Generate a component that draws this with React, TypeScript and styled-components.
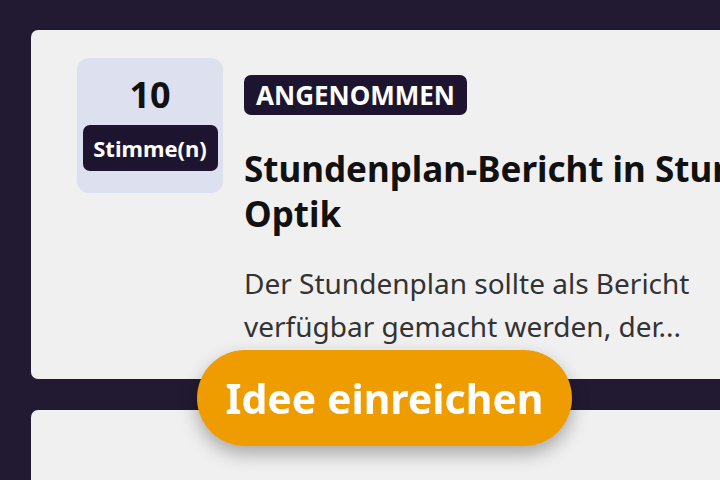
import styled, { createGlobalStyle } from "styled-components";

const GlobalStyle = createGlobalStyle`
  html, body {
    margin: 0;
    padding: 0;
    background: #221a32;
    overflow: hidden;
    font-family: "Noto Sans", "Open Sans", sans-serif;
  }
`;

const Page = styled.div`
  width: 1000px;
  padding: 30px 0 0 31px;
  display: flex;
  flex-direction: column;
  gap: 31px;
`;

const Card = styled.div<{ $height: number }>`
  background: #f0f0f0;
  border-radius: 7px;
  height: ${(p) => p.$height}px;
  padding: 28px 46px;
  box-sizing: border-box;
  display: flex;
  gap: 21px;
`;

const VoteBox = styled.div`
  flex: none;
  width: 146px;
  height: 135px;
  background: #dde1ef;
  border-radius: 12px;
  display: flex;
  flex-direction: column;
  align-items: center;
  padding-top: 13px;
  box-sizing: border-box;
`;

const VoteCount = styled.div`
  font-size: 36px;
  font-weight: 700;
  line-height: 48px;
  color: #111;
`;

const VoteLabel = styled.div`
  margin-top: 6px;
  width: 135px;
  height: 46px;
  border-radius: 7px;
  background: #1d1530;
  color: #fff;
  font-size: 22px;
  font-weight: 700;
  display: flex;
  align-items: center;
  justify-content: center;
`;

const Content = styled.div`
  width: 700px;
  padding-top: 17px;
`;

const Status = styled.span`
  display: inline-block;
  background: #1d1530;
  color: #fff;
  font-size: 26px;
  font-weight: 700;
  text-transform: uppercase;
  line-height: 40px;
  padding: 0 12px;
  border-radius: 7px;
`;

const Title = styled.h2`
  margin: 31px 0 0;
  font-size: 35px;
  font-weight: 700;
  line-height: 45px;
  color: #111;
  width: 620px;
`;

const Description = styled.p`
  margin: 26px 0 0;
  font-size: 28px;
  line-height: 43px;
  color: #333;
  width: 500px;
`;

const SubmitButton = styled.button`
  position: fixed;
  left: 197px;
  bottom: 34px;
  width: 375px;
  height: 96px;
  border: none;
  border-radius: 48px;
  background: #ef9c00;
  color: #fff;
  font-family: "Noto Sans", "Open Sans", sans-serif;
  font-size: 41px;
  font-weight: 700;
  box-shadow: 0 8px 18px rgba(0, 0, 0, 0.3);
  cursor: pointer;
`;

export default function App() {
  return (
    <>
      <GlobalStyle />
      <Page>
        <Card $height={349}>
          <VoteBox>
            <VoteCount>10</VoteCount>
            <VoteLabel>Stimme(n)</VoteLabel>
          </VoteBox>
          <Content>
            <Status>Angenommen</Status>
            <Title>Stundenplan-Bericht in Stunden-Optik</Title>
            <Description>
              Der Stundenplan sollte als Bericht verfügbar gemacht werden, der...
            </Description>
          </Content>
        </Card>
        <Card $height={200} />
      </Page>
      <SubmitButton>Idee einreichen</SubmitButton>
    </>
  );
}
